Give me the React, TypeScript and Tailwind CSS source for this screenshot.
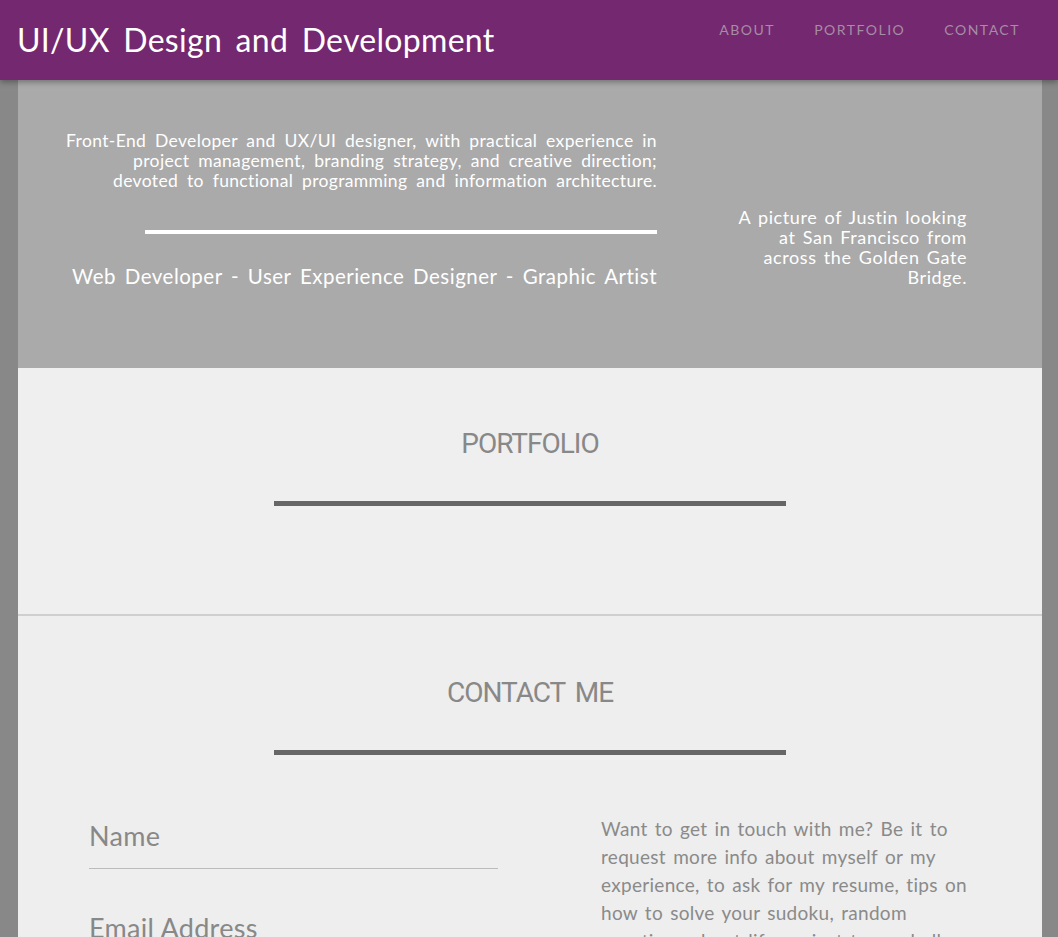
import React from 'react';

const font = { fontFamily: 'Lato, "Open Sans", sans-serif' };
const headingFont = { fontFamily: 'Roboto, "Liberation Sans", sans-serif' };

const intro = [
  'Front-End Developer and UX/UI designer, with practical experience in',
  'project management, branding strategy, and creative direction;',
  'devoted to functional programming and information architecture.',
];

const caption = ['A picture of Justin looking', 'at San Francisco from', 'across the Golden Gate', 'Bridge.'];

function Header() {
  return (
    <header className="h-20 bg-[#74286f] flex items-start justify-between shadow-[0_2px_6px_rgba(0,0,0,0.35)] relative z-10">
      <h1 className="pl-[17px] pt-[19px] text-[32px] leading-[42px] text-white tracking-[0.3px] [word-spacing:5px]">
        UI/UX Design and Development
      </h1>
      <nav className="flex gap-[39px] pr-[38px] pt-[20px] text-[14px] leading-5 tracking-[1.5px] text-[#a68ca5]">
        <a>ABOUT</a>
        <a>PORTFOLIO</a>
        <a>CONTACT</a>
      </nav>
    </header>
  );
}

function Hero() {
  return (
    <section className="bg-[#aaaaaa] h-[288px] flex pl-12 text-white">
      <div className="w-[591px] flex flex-col items-end pt-[51px]">
        <div className="text-[17.5px] leading-5 tracking-[0.35px] [word-spacing:4px] text-right">
          {intro.map((line) => (
            <span key={line} className="block whitespace-nowrap">{line}</span>
          ))}
        </div>
        <div className="mt-[39px] h-1 w-[512px] bg-white" />
        <p className="mt-[28px] text-[20.5px] leading-7 tracking-[0.5px] [word-spacing:3px] whitespace-nowrap">
          Web Developer - User Experience Designer - Graphic Artist
        </p>
      </div>
      <div className="ml-[43px] w-[267px] pt-[127px] text-right text-[18px] leading-5 tracking-[0.6px] [word-spacing:2px]">
        {caption.map((line) => (
          <span key={line} className="block whitespace-nowrap">{line}</span>
        ))}
      </div>
    </section>
  );
}

function SectionTitle({ children }: { children: React.ReactNode }) {
  return (
    <div className="flex flex-col items-center">
      <h2 className="text-[28px] leading-9 text-[#888888] tracking-[-1px] [word-spacing:4px]" style={headingFont}>
        {children}
      </h2>
      <div className="mt-[39px] h-[5px] w-[512px] bg-[#666666]" />
    </div>
  );
}

function Portfolio() {
  return (
    <section className="bg-[#efefef] h-[248px] pt-[58px] border-b-2 border-[#cfcfcf]">
      <SectionTitle>PORTFOLIO</SectionTitle>
    </section>
  );
}

function Contact() {
  return (
    <section className="bg-[#eeeeee] pt-[59px] pb-20">
      <SectionTitle>CONTACT ME</SectionTitle>
      <div className="flex mt-[60px] pl-[71px]">
        <div className="w-[409px] text-[#888888]">
          <div className="border-b border-[#bbbbbb] pb-[13px]">
            <label className="block pt-[2px] text-[27px] leading-[38px] tracking-[0.3px]">Name</label>
          </div>
          <div className="pt-[40px]">
            <label className="block text-[27px] leading-[38px] tracking-[0.3px]">Email Address</label>
          </div>
        </div>
        <p className="ml-[103px] w-[368px] text-[19px] leading-7 text-[#8a8a8a] tracking-[0.3px] [word-spacing:2px]">
          Want to get in touch with me? Be it to request more info about myself or my experience, to ask for my resume,
          tips on how to solve your sudoku, random questions about life, or just to say hello, feel free to drop me a line.
        </p>
      </div>
    </section>
  );
}

export default function App() {
  return (
    <div className="min-h-screen bg-[#888888]" style={font}>
      <Header />
      <main className="ml-[18px] w-[1024px]">
        <Hero />
        <Portfolio />
        <Contact />
      </main>
    </div>
  );
}
